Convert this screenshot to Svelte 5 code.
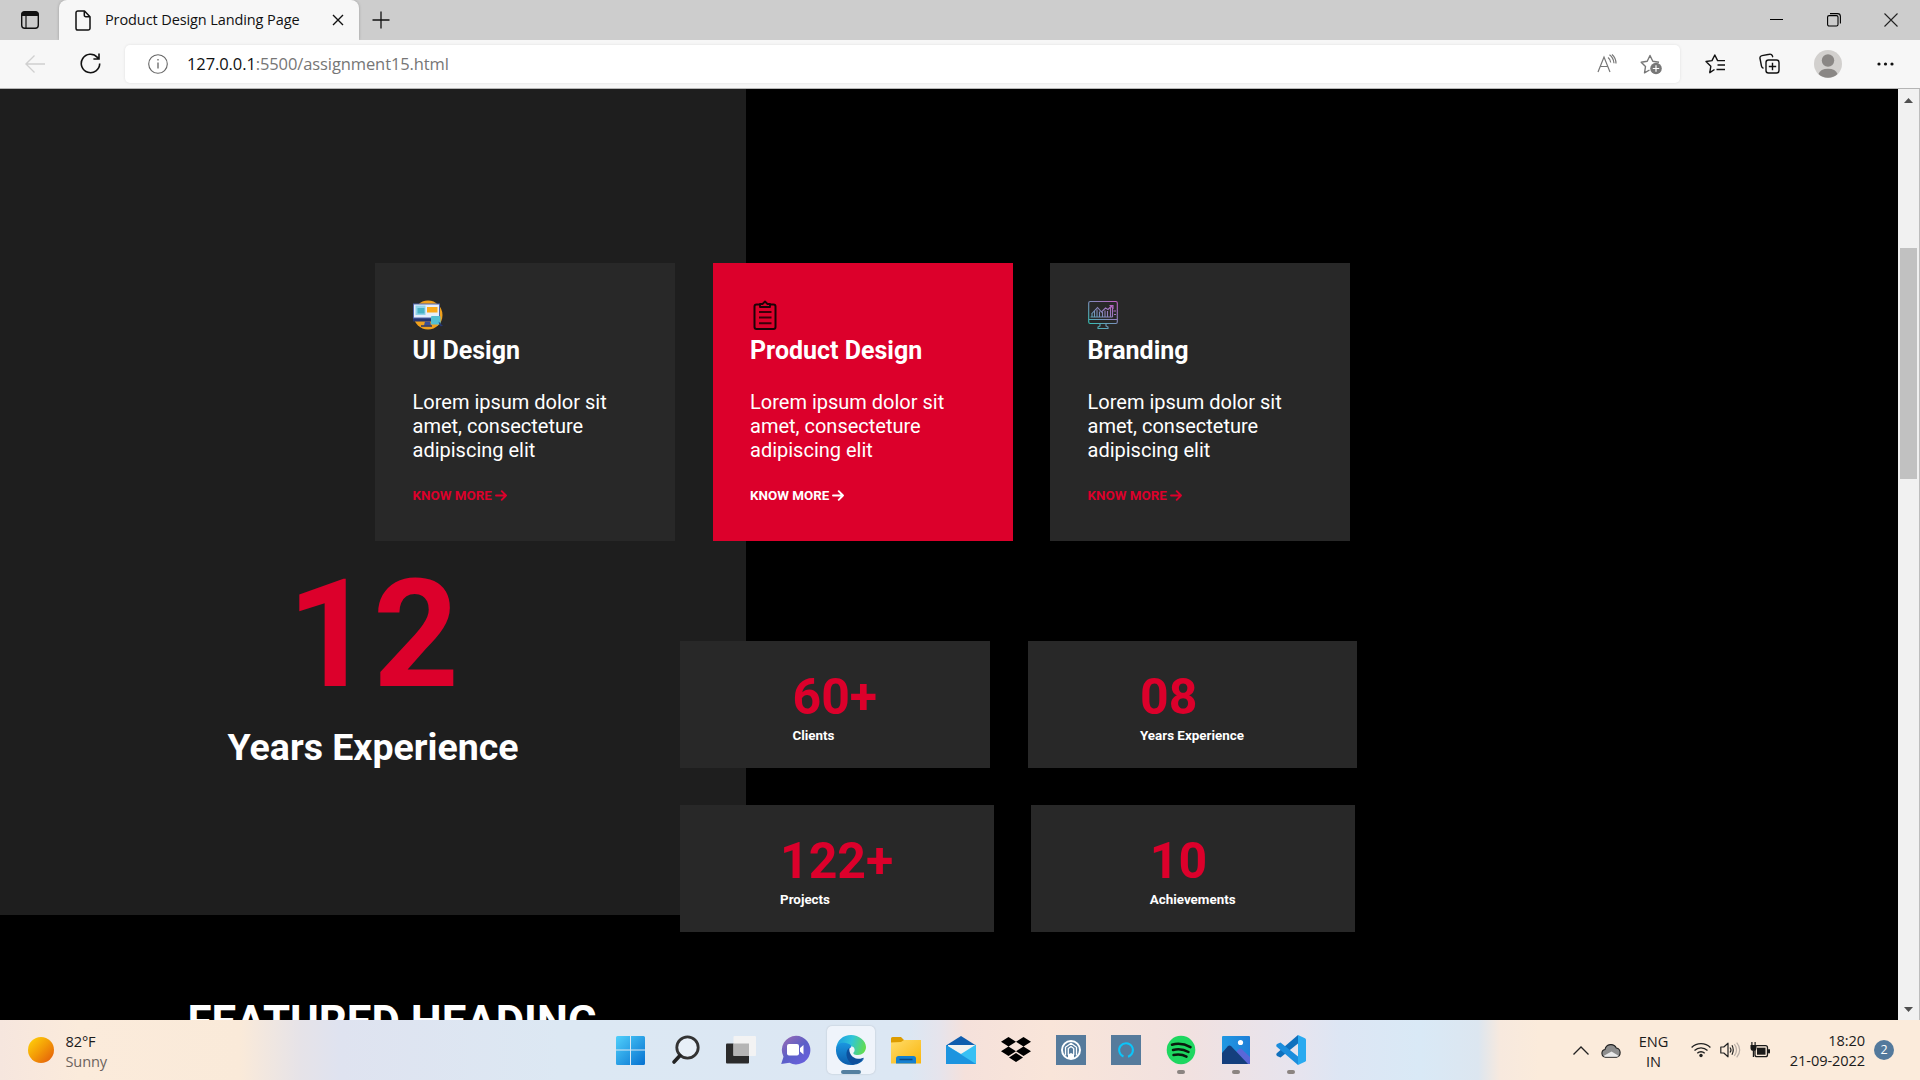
<script>
  const cards = [
    { title: 'UI Design', icon: 'ui' },
    { title: 'Product Design', icon: 'clipboard', active: true },
    { title: 'Branding', icon: 'chart' }
  ];
  const copy = ['Lorem ipsum dolor sit', 'amet, consecteture', 'adipiscing elit'];
  const statRows = [
    [
      { value: '60+', label: 'Clients', kind: 'clients' },
      { value: '08', label: 'Years Experience', kind: 'years' }
    ],
    [
      { value: '122+', label: 'Projects', kind: 'projects' },
      { value: '10', label: 'Achievements', kind: 'achievements' }
    ]
  ];
  const apps = [
    { name: 'start' }, { name: 'search' }, { name: 'tasks' }, { name: 'chat' },
    { name: 'edge', active: true }, { name: 'folder' }, { name: 'mail' }, { name: 'dropbox' },
    { name: 'audio' }, { name: 'alexa' }, { name: 'spotify', open: true },
    { name: 'photos', open: true }, { name: 'code', open: true }
  ];
</script>

<div class="screen">
  <header class="titlebar">
    <svg class="tabs-icon" width="20" height="20" viewBox="0 0 20 20">
      <rect x="1.7" y="1.7" width="16.6" height="16.6" rx="3" fill="none" stroke="#111" stroke-width="1.4" />
      <path d="M1.5 6V4.5a3 3 0 0 1 3-3h11a3 3 0 0 1 3 3V6z" fill="#111" />
      <path d="M6 6v12" stroke="#111" stroke-width="1.2" />
    </svg>
    <div class="tab">
      <svg width="16" height="21" viewBox="0 0 16 21" fill="none" stroke="#111" stroke-width="1.5" stroke-linejoin="round">
        <path d="M2.8 1h6.7l5.5 5.7v11.5a1.8 1.8 0 0 1-1.8 1.8H2.8A1.8 1.8 0 0 1 1 18.2V2.8A1.8 1.8 0 0 1 2.8 1z" />
        <path d="M9.3 1.2v4a1.6 1.6 0 0 0 1.6 1.6h4" />
      </svg>
      <span class="tab-title">Product Design Landing Page</span>
      <svg class="tab-close" width="12" height="12" viewBox="0 0 12 12" stroke="#111" stroke-width="1.4"><path d="M1 1l10 10M11 1L1 11" /></svg>
    </div>
    <svg class="plus" width="18" height="18" viewBox="0 0 18 18" stroke="#111" stroke-width="1.3"><path d="M9 .5v17M.5 9h17" /></svg>
    <div class="window-buttons">
      <svg width="13" height="13" viewBox="0 0 13 13" stroke="#000" stroke-width="1"><path d="M0 5.5h13" /></svg>
      <svg width="14" height="14" viewBox="0 0 14 14" fill="none" stroke="#000" stroke-width="1.1">
        <rect x=".6" y="2.6" width="10.4" height="10.4" rx="1.5" />
        <path d="M3 .6h7.5a2.9 2.9 0 0 1 2.9 2.9V10.5" />
      </svg>
      <svg width="14" height="14" viewBox="0 0 14 14" stroke="#222" stroke-width="1.1"><path d="M.5.5l13 13M13.500.5l-13 13" /></svg>
    </div>
  </header>

  <div class="toolbar">
    <svg class="back" width="20" height="18" viewBox="0 0 20 18" fill="none" stroke="#d0d0d0" stroke-width="1.4"><path d="M20 9H1M9.500.6L1 9l8.5 8.4" /></svg>
    <svg class="reload" width="21" height="21" viewBox="0 0 21 21" fill="none" stroke="#111" stroke-width="1.6"><path d="M19.7 10.5a9.2 9.2 0 1 1-2.3-6.1l1.3 1.5M19 .5V6h-5.6" /></svg>
    <div class="address">
      <svg width="20" height="20" viewBox="0 0 20 20" fill="none" stroke="#666" stroke-width="1.1">
        <circle cx="10" cy="10" r="9.3" /><path d="M10 8.5v6M10 5v1.6" stroke-width="1.3" />
      </svg>
      <span class="url"><b>127.0.0.1</b>:5500/assignment15.html</span>
      <svg class="read" width="20" height="19" viewBox="0 0 20 19" fill="none" stroke="#777" stroke-width="1.2">
        <path d="M1 18L7 3l6 15M3.2 12.5h7.6M11 3.5q2.5 1.7 2.7 5M12.500.8q4 3 4.500 8.500M15 .5q4 3.500 4 9" />
      </svg>
      <svg class="fav" width="23" height="22" viewBox="0 0 23 22">
        <path d="M9.5 17L4.5 19.8l1-6.2L1.2 9.2l6-.9L10 2.500l2.800 5.800 6.200.9" fill="none" stroke="#777" stroke-width="1.4" stroke-linejoin="round" />
        <circle cx="16" cy="15.5" r="5.8" fill="#777" /><path d="M16 12.3v6.4M12.8 15.5h6.4" stroke="#fff" stroke-width="1.2" />
      </svg>
    </div>
    <svg class="favorites" width="21" height="20" viewBox="0 0 21 20" fill="none" stroke="#111" stroke-width="1.4" stroke-linejoin="round">
      <path d="M9.5 15.5L4.8 18.7l1-6.4L1 7.5l6-.9L9.8 1l2.8 5.6H20M12.5 11H20M11.5 15.5H20" />
    </svg>
    <svg class="collections" width="21" height="21" viewBox="0 0 21 21" fill="none" stroke="#111" stroke-width="1.4">
      <rect x="7" y="7" width="13" height="13" rx="2.5" /><path d="M13.5 9.8v7.4M9.8 13.5h7.4M4.5 15.2a2.5 2.5 0 0 1-2-2L1 5.5a2.5 2.5 0 0 1 2-2.9l7.5-1.4a2.5 2.5 0 0 1 3 2l.3 1" />
    </svg>
    <svg class="avatar" width="28" height="28" viewBox="0 0 28 28">
      <circle cx="14" cy="14" r="14" fill="#d2d0ce" /><circle cx="14" cy="10.5" r="6.2" fill="#8a8785" />
      <path d="M4.5 24a9.8 7 0 0 1 19 0a14 14 0 0 1-19 0z" fill="#8a8785" />
    </svg>
    <svg class="more" width="17" height="4" viewBox="0 0 17 4" fill="#111"><circle cx="2" cy="2" r="1.6" /><circle cx="8.5" cy="2" r="1.6" /><circle cx="15" cy="2" r="1.6" /></svg>
  </div>

  <div class="viewport">
    <main class="page">
      <section class="cards">
        {#each cards as card}
          <article class="card" class:active={card.active}>
            <svg class="card-icon" width="30" height="30" viewBox="0 0 30 30">
              {#if card.icon === 'ui'}
                <circle cx="15" cy="15" r="14.5" fill="#f0a01c" />
                <path d="M0 18h26v3.500H0z" fill="#25356f" />
                <rect x=".5" y="4" width="26" height="14" fill="#e6eefb" stroke="#4c62a8" stroke-width="1" />
                <rect x="2.5" y="5.500" width="10" height="9.500" fill="#8fd3ea" /><rect x="4.500" y="8" width="7" height="5.500" fill="#48b2c4" /><rect x="14" y="7" width="10.5" height="5.5" fill="#fba919" />
                <path d="M12 21.500h5l1 4h-7z" fill="#3a4f98" /><path d="M8 26h11" stroke="#25356f" stroke-width="1.5" />
                <rect x="18" y="16" width="9.5" height="8.500" rx="1" fill="#54bfd3" /><path d="M25.500 21.500l4.500 4.500-3 .2z" fill="#25356f" />
              {:else if card.icon === 'clipboard'}
                <g fill="none" stroke="#1c0207" stroke-width="2" stroke-linejoin="round">
                  <path d="M10 4.500H6.500A2 2 0 0 0 4.500 6.500v20.500a2 2 0 0 0 2 2h17a2 2 0 0 0 2-2V6.500a2 2 0 0 0-2-2H20" />
                  <path d="M10 7V4h2.500L15 1.500 17.500 4H20v3z" stroke-width="1.8" />
                  <path d="M9 12h12.5M9 17.500h12.500M9 23.300h12.500" stroke="#3a000a" />
                </g>
              {:else}
                <defs><linearGradient id="brand" x1="0" y1="1" x2="1" y2="0"><stop offset="0" stop-color="#35c0b4" /><stop offset="1" stop-color="#c45cc2" /></linearGradient></defs>
                <g fill="none" stroke="url(#brand)" stroke-width="1.1">
                  <rect x=".7" y="1.5" width="28.6" height="22" rx="1.5" />
                  <path d="M1 19.500h28M2.500 17h22M4 17v-3.500M6.500 17v-6M9 17V9.500M11.500 17v-5.500M14.500 17v-5M17 17v-6.500M19.500 17v-6M22.500 17V7h2v10M3.500 14l6-6.500 4 4.500 4-4 2.500 1.500L24 5.500M21.500 5.500H25V9M25.500 11H28M26 14.500h2M12 23.500v2.500l-2 1v1.500h10V27l-2-1v-2.500" />
                </g>
              {/if}
            </svg>
            <h3>{card.title}</h3>
            <p>{#each copy as line}<span>{line}</span>{/each}</p>
            <div class="know"><span>KNOW MORE</span>
              <svg width="12" height="11" viewBox="0 0 12 11" fill="none" stroke="currentColor" stroke-width="1.9" stroke-linecap="round" stroke-linejoin="round"><path d="M1 5.500h10M6.700 1.200L11 5.500 6.700 9.800" /></svg>
            </div>
          </article>
        {/each}
      </section>

      <section class="numbers">
        <div class="experience"><div class="big">12</div><h2>Years Experience</h2></div>
        <div class="stats">
          {#each statRows as row}
            <div class="stat-row">
              {#each row as s}
                <div class="stat {s.kind}"><div class="value">{s.value}</div><div class="label">{s.label}</div></div>
              {/each}
            </div>
          {/each}
        </div>
      </section>
      <h1>FEATURED HEADING</h1>
    </main>
    <div class="scrollbar">
      <svg width="9" height="5" viewBox="0 0 9 5"><path d="M0 5L4.500 0 9 5z" fill="#505050" /></svg>
      <div class="thumb"></div>
      <svg class="down" width="9" height="5" viewBox="0 0 9 5"><path d="M0 0l4.500 5L9 0z" fill="#505050" /></svg>
    </div>
  </div>

  <footer class="taskbar">
    <div class="weather">
      <div class="sun"></div>
      <div class="weather-text"><span>82°F</span><span class="muted">Sunny</span></div>
    </div>
    <div class="apps">
      {#each apps as app}
        <div class="app" class:active={app.active} class:open={app.open}>
          <svg width="30" height="30" viewBox="0 0 30 30">
            {#if app.name === 'start'}
              <defs><linearGradient id="win" x1="0" y1="0" x2="1" y2="1"><stop offset="0" stop-color="#50d0fb" /><stop offset="1" stop-color="#0671d0" /></linearGradient></defs>
              <path d="M1.500 1H14v13.500H0V2.500A1.500 1.500 0 0 1 1.500 1zM15 1h12.500A1.500 1.500 0 0 1 29 2.500v12H15zM0 15.500h14V30H1.500A1.500 1.500 0 0 1 0 28.500zM15 15.500h14v13a1.500 1.500 0 0 1-1.500 1.500H15z" fill="url(#win)" />
            {:else if app.name === 'search'}
              <circle cx="16.5" cy="12.5" r="10.7" fill="#e8f0f8" stroke="#333" stroke-width="2.8" /><path d="M9 20.500l-6 6.500" stroke="#222" stroke-width="3.6" stroke-linecap="round" />
            {:else if app.name === 'tasks'}
              <rect y="8.5" width="23" height="20" rx="1" fill="#2b2b2b" /><rect x="7.5" y="1" width="22.5" height="20" rx="1" fill="#f3f3f3" />
              <path d="M7.500 8.500H23V21H7.500z" fill="#b5b5b5" />
            {:else if app.name === 'chat'}
              <defs><linearGradient id="chat" x1=".1" y1="0" x2=".9" y2="1"><stop offset="0" stop-color="#9a6bb4" /><stop offset=".5" stop-color="#5b5fc7" /><stop offset="1" stop-color="#6a5fe0" /></linearGradient></defs>
              <path d="M15 .8a14.300 14.300 0 1 1-6.500 27L.2 29l2.300-7.200A14.300 14.300 0 0 1 15 .8z" fill="url(#chat)" />
              <rect x="6" y="9" width="12" height="11.5" rx="2" fill="#fff" /><path d="M19 13l3.500-3v9.500l-3.500-3z" fill="#fff" />
            {:else if app.name === 'edge'}
              <defs>
                <linearGradient id="eg" x1="0" y1=".3" x2="1" y2=".5"><stop offset="0" stop-color="#1b9de2" /><stop offset=".5" stop-color="#30c5d8" /><stop offset="1" stop-color="#62dd4e" /></linearGradient>
                <linearGradient id="eb" x1="0" y1="0" x2="0" y2="1"><stop offset="0" stop-color="#1b96e0" /><stop offset="1" stop-color="#0b5cab" /></linearGradient>
              </defs>
              <path d="M0 14C1 5 7 0 15 0s15 6 15 12c0 5-4 8-8 8-4.500 0-5.500-1.500-4-3 1.500-2 .5-6-4-6C7 9 1 12 0 14z" fill="url(#eg)" />
              <path d="M0 14C1 8 6 7 10 8c4.500.8 6 3 5 4.500C11 13 10 24 20 26c3 .6 6-1 8-2.500C26 28 20 30 15 30 6 30-.5 23 0 14z" fill="url(#eb)" />
              <path d="M13.500 12.500C9 15.500 9 25 17 29.800c5-.8 9-3.800 11-7-1.500.2-3 1.200-6 1-6-.4-9.500-6-8.500-11.300z" fill="#0d4f9c" />
            {:else if app.name === 'folder'}
              <defs><linearGradient id="fold" x1="0" y1="0" x2="1" y2="1"><stop offset="0" stop-color="#ffdc69" /><stop offset="1" stop-color="#fab50c" /></linearGradient></defs>
              <path d="M0 3.500A1.500 1.500 0 0 1 1.500 2H10l3 3v5H0z" fill="#dd9c00" /><path d="M0 7.500L10 7l3-2h17v23.500H0z" fill="url(#fold)" />
              <path d="M5 28.500v-5A2.500 2.500 0 0 1 7.500 21h15a2.500 2.500 0 0 1 2.500 2.500v5z" fill="#1480d0" /><path d="M8.500 24.500h13" stroke="#0b4a85" stroke-width="1.5" />
            {:else if app.name === 'mail'}
              <path d="M0 10.500L15 1l15 9.500v6H0z" fill="#0f5dae" /><path d="M2 10h27v8H2z" fill="#f3f1f0" /><path d="M0 10l15 9L30 9.500V29H0z" fill="#38c0f4" /><path d="M0 10l30 19H0z" fill="#1c94df" />
            {:else if app.name === 'dropbox'}
              <path d="M7.500 2L15 6.800 7.500 11.500 0 6.800zM22.500 2L30 6.800 22.500 11.500 15 6.800zM7.500 11.500L15 16.300 7.500 21 0 16.300zM22.500 11.500L30 16.300 22.500 21 15 16.300zM15 18l7 4.500-7 4.600-7-4.600z" />
            {:else if app.name === 'audio'}
              <rect width="30" height="30" fill="#567b9c" /><circle cx="15" cy="15" r="9" fill="none" stroke="#fff" stroke-width="2" />
              <path d="M9.500 20.500V12.300L15 8.300l5.500 4v8.200M12.300 20V13.500L15 11.500l2.700 2V20" fill="none" stroke="#fff" stroke-width="1.3" /><path d="M12 19.500l3-1.500 3 1.500V24h-6z" fill="#fff" />
            {:else if app.name === 'alexa'}
              <rect width="30" height="30" fill="#567b9c" /><path d="M12.500 21.500a6.900 6.900 0 1 1 4.500.2" fill="none" stroke="#0cc5f9" stroke-width="2" />
            {:else if app.name === 'spotify'}
              <circle cx="15" cy="15" r="14.3" fill="#1ed760" /><path d="M6 9.700q9.500-2.500 18.500 2.500M7 15q8.500-2 15.500 2M7.500 20q7.500-1.500 13 1.700" fill="none" stroke="#0a1a0e" stroke-width="2.5" stroke-linecap="round" />
            {:else if app.name === 'photos'}
              <defs><linearGradient id="ph" x1="0" y1="0" x2="1" y2="0"><stop offset="0" stop-color="#2098e2" /><stop offset="1" stop-color="#1f7fd8" /></linearGradient></defs>
              <rect x="1" y="1" width="28" height="28" rx="1" fill="url(#ph)" /><path d="M14 18l4-4q1.300-1 2.600 0L29 22v7H16z" fill="#5a67d8" /><path d="M1 18l6-7q1.500-1.200 3 0L27 29H1z" fill="#143f7d" /><circle cx="19.5" cy="7.5" r="2.6" fill="#fff" />
            {:else}
              <path d="M22 0l7 3.200q1 .5 1 1.600v20.400q0 1.100-1 1.600L22 30z" fill="#2aaaf0" /><path d="M22 0v8.500L4.500 22.500 1 21q-1.500-1.800 0-3z" fill="#0f70bd" /><path d="M22 30v-8.500L4.500 7.500 1 9q-1.500 1.800 0 3z" fill="#1b8ddd" />
            {/if}
          </svg>
        </div>
      {/each}
    </div>
    <div class="tray">
      <svg class="chev" width="16" height="9" viewBox="0 0 16 9" fill="none" stroke="#222" stroke-width="1.3"><path d="M.5 8.500L8 1l7.500 7.500" /></svg>
      <svg class="cloud" width="20" height="15" viewBox="0 0 20 15">
        <path d="M4.500 14.200A3.900 3.900 0 0 1 4 6.500 6 6 0 0 1 15.300 5 4.700 4.700 0 0 1 15.500 14.200z" fill="#8d8d8d" stroke="#222" stroke-width="1.1" /><path d="M2.500 13L10.500 8.500l7.500 4.500-2 .8H4z" fill="#e9e9e9" />
      </svg>
      <div class="lang"><span>ENG</span><span>IN</span></div>
      <svg class="wifi" width="20" height="16" viewBox="0 0 20 16" fill="none" stroke="#222" stroke-width="1.3">
        <path d="M.6 5.500a13.300 13.300 0 0 1 18.800 0M3.500 8.500a9.200 9.200 0 0 1 13 0M6.300 11.300a5.200 5.200 0 0 1 7.400 0" /><circle cx="10" cy="13.5" r="1.7" fill="#222" stroke="none" />
      </svg>
      <svg class="volume" width="21" height="16" viewBox="0 0 21 16" fill="none" stroke="#222" stroke-width="1.2">
        <path d="M.8 5h3L8 1.200v13.600L3.800 11h-3z" stroke-linejoin="round" /><path d="M10 5.500q2 2.500 0 5M12 3.300q2.500 4.700 0 9.400" /><path d="M14.300 2.200q4.500 5.800 0 11.600M16.700.7q6 7.300 0 14.600" stroke="#b9aea6" />
      </svg>
      <svg class="battery" width="21" height="17" viewBox="0 0 21 17">
        <rect x="5" y="3.7" width="12.5" height="11" rx="2" fill="none" stroke="#1a1a1a" stroke-width="1.3" /><rect x="7" y="5.7" width="8.5" height="7" fill="#1a1a1a" /><rect x="18" y="7" width="2" height="4.5" rx="1" fill="#1a1a1a" />
        <path d="M.5 3h6v3a3 3 0 0 1-6 0zM1.300 0h1.200v3H1.300zM4.500 0h1.200v3H4.500zM2.800 8h1.300v7H2.800z" fill="#1a1a1a" />
      </svg>
      <div class="clock"><span>18:20</span><span>21-09-2022</span></div>
      <div class="badge">2</div>
    </div>
  </footer>
</div>

<style>
  :global(body) { margin: 0; overflow: hidden; }
  .screen { width: 1920px; height: 1080px; display: flex; flex-direction: column; overflow: hidden; font-family: 'Open Sans', sans-serif; }
  svg { display: block; flex: none; }
  span { white-space: nowrap; }

  .titlebar { height: 40px; background: #cdcdcd; display: flex; align-items: center; }
  .tabs-icon { margin: 0 18px 0 20px; width: 20px; }
  .tab { width: 300px; height: 40px; margin-left: 1px; background: #f7f7f7; border-radius: 8px 8px 0 0; display: flex; align-items: center; box-sizing: border-box; padding: 0 15px 0 16px; box-shadow: 0 0 3px rgba(0, 0, 0, .25); }
  .tab-title { margin-left: 14px; padding-bottom: 2px; font-size: 14.5px; letter-spacing: -.1px; color: #111; flex: 1; }
  .plus { margin-left: 12.5px; }
  .window-buttons { margin-left: auto; display: flex; align-items: center; gap: 43.5px; padding-right: 22px; }

  .toolbar { height: 49px; box-sizing: border-box; background: #f7f7f7; border-bottom: 1px solid #b5b5b5; display: flex; align-items: center; }
  .back { margin-left: 25px; padding-bottom: 1px; }
  .reload { margin-left: 35px; padding-bottom: 1px; }
  .address { width: 1555px; height: 38px; margin-left: 24px; background: #fff; border-radius: 5px; box-shadow: 0 0 3px rgba(0, 0, 0, .1); box-sizing: border-box; padding: 0 17px 0 22.5px; display: flex; align-items: center; }
  .url { margin-left: 19.5px; padding-bottom: 2px; font-size: 16.5px; letter-spacing: -.1px; color: #767676; flex: 1; }
  .url b { font-weight: 400; color: #111; }
  .read { padding-bottom: 1px; }
  .fav { margin-left: 23px; }
  .favorites { margin-left: 24.5px; padding-bottom: 1px; }
  .collections { margin-left: 33.5px; padding-bottom: 1px; }
  .avatar { margin-left: 34px; }
  .more { margin-left: 34.5px; }

  .viewport { height: 931px; display: flex; background: #000; }
  .page { width: 1898px; height: 931px; overflow: hidden; box-sizing: border-box; padding-top: 174px; background: linear-gradient(#1e1e1e, #1e1e1e) 0 0 / 746px 826px no-repeat #000; color: #fff; font-family: Roboto, sans-serif; }
  .cards { display: flex; gap: 37.5px; padding-left: 375px; }
  .card { width: 300px; height: 278px; box-sizing: border-box; padding: 37px 37.5px; background: #282828; }
  .card.active { background: #dc002b; }
  h1, h2, h3, p { margin: 0; }
  h3 { margin-top: 6px; font-size: 25px; line-height: 30px; font-weight: 700; white-space: nowrap; }
  p { margin-top: 24px; font-size: 20px; line-height: 24px; }
  p span { display: block; }
  .know { margin-top: 25px; display: flex; align-items: center; gap: 3px; height: 16px; font-size: 13.4px; line-height: 16px; font-weight: 700; color: #dc002b; }
  .know span { padding-top: 2px; }
  .active .know { color: #fff; }

  .numbers { display: grid; grid-template-columns: 680px auto; height: 391px; }
  .experience { width: 746px; text-align: center; padding-top: 6px; }
  .big { font-size: 150px; line-height: 176px; font-weight: 700; color: #dc002b; }
  h2 { margin-top: 2px; font-size: 37.5px; line-height: 44px; font-weight: 700; }
  .stats { padding-top: 100px; display: flex; flex-direction: column; gap: 37px; position: relative; }
  .stat-row { display: flex; gap: 37.5px; }
  .stat { height: 127px; box-sizing: border-box; padding-top: 27px; background: #282828; font-weight: 700; }
  .value { font-size: 50px; line-height: 59px; color: #dc002b; }
  .label { margin-top: 1px; font-size: 13.4px; line-height: 15px; white-space: nowrap; }
  .clients { width: 310px; padding-left: 112.5px; }
  .years { width: 329px; padding-left: 112.5px; }
  .projects { width: 313.5px; padding-left: 100px; }
  .achievements { width: 324px; padding-left: 118.75px; }
  h1 { margin: 65px 0 0 187.5px; font-size: 43.75px; line-height: 51px; font-weight: 700; white-space: nowrap; }

  .scrollbar { width: 22px; box-sizing: border-box; background: #f1f1f1; border-right: 1px solid #bdbdbd; display: flex; flex-direction: column; align-items: center; padding: 9px 0 8px; }
  .thumb { width: 17px; height: 231px; margin-top: 145px; background: #c1c1c1; }
  .down { margin-top: auto; }

  .taskbar { height: 60px; display: flex; color: #1b1b1b; background: linear-gradient(90deg, #f6e6de 0, #fbebdb 80px, #faead9 240px, #e6e3e8 300px, #dfe3f0 340px, #dce8f3 560px, #dce7f3 910px, #e6e4ec 940px, #f5e1db 965px, #f9e5d9 1050px, #f1e1e0 1190px, #e6e4ef 1300px, #dde6f4 1340px, #d9e9f6 1420px, #dce6f0 1478px, #f7e9de 1500px, #fbebdb 1540px, #fbebdb 1920px); }
  .weather { width: 603.5px; box-sizing: border-box; padding-left: 28px; display: flex; align-items: center; }
  .sun { width: 26px; height: 26px; border-radius: 50%; background: linear-gradient(135deg, #ffd20a 5%, #f39a07 50%, #e2560b 100%); }
  .weather-text { margin-left: 11.5px; padding-top: 1px; display: flex; flex-direction: column; font-size: 14.6px; line-height: 20px; letter-spacing: -.15px; }
  .muted { color: #6b635e; }
  .apps { display: flex; align-items: center; }
  .app { width: 48px; height: 48px; margin: 0 3.5px; border-radius: 5px; display: grid; place-items: center; }
  .app.active, .app.open { position: relative; }
  .app.active { background: #eff4fb; box-shadow: 0 0 2px rgba(0, 0, 0, .18); }
  .app.active::after, .app.open::after { content: ''; position: absolute; left: 20px; bottom: 0; width: 8px; height: 4px; border-radius: 2px; background: #8b8481; }
  .app.active::after { left: 14px; width: 20px; background: #5580a0; }
  .tray { flex: 1; display: flex; align-items: center; font-size: 14.6px; line-height: 20px; letter-spacing: -.1px; }
  .chev { margin-left: 254px; }
  .cloud { margin-left: 12px; }
  .lang { width: 34px; margin-left: 16px; padding-top: 1px; display: flex; flex-direction: column; align-items: center; }
  .wifi { margin-left: 20px; }
  .volume { margin-left: 9.5px; }
  .battery { margin-left: 8.5px; }
  .clock { width: 94.5px; display: flex; flex-direction: column; align-items: flex-end; }
  .badge { width: 20px; height: 20px; margin-left: 9px; border-radius: 50%; background: #53799c; color: #fff; font-size: 12.5px; text-align: center; }
</style>
